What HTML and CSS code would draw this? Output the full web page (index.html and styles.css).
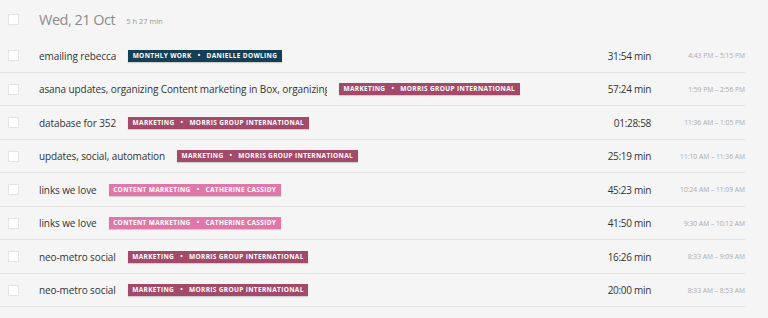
FILE: index.html
```html
<!DOCTYPE html>
<html lang="en">
<head>
  <meta charset="UTF-8">
  <title>Time entries</title>
  <link rel="stylesheet" href="styles.css">
</head>
<body>
  <div class="day">
    <div class="day-header">
      <span class="checkbox"></span>
      <h2>Wed, 21 Oct</h2>
      <span class="day-total">5 h 27 min</span>
    </div>
    <ul class="entries">
      <li class="entry">
        <span class="checkbox"></span>
        <div class="entry-main">
          <span class="entry-title">emailing rebecca</span>
          <span class="tag tag-monthly">Monthly Work <i>•</i> Danielle Dowling</span>
        </div>
        <span class="duration">31:54 min</span>
        <span class="range">4:43 PM – 5:15 PM</span>
      </li>
      <li class="entry">
        <span class="checkbox"></span>
        <div class="entry-main">
          <span class="entry-title">asana updates, organizing Content marketing in Box, organizing C</span>
          <span class="tag tag-marketing">Marketing <i>•</i> Morris Group International</span>
        </div>
        <span class="duration">57:24 min</span>
        <span class="range">1:59 PM – 2:56 PM</span>
      </li>
      <li class="entry">
        <span class="checkbox"></span>
        <div class="entry-main">
          <span class="entry-title">database for 352</span>
          <span class="tag tag-marketing">Marketing <i>•</i> Morris Group International</span>
        </div>
        <span class="duration">01:28:58</span>
        <span class="range">11:36 AM – 1:05 PM</span>
      </li>
      <li class="entry">
        <span class="checkbox"></span>
        <div class="entry-main">
          <span class="entry-title">updates, social, automation</span>
          <span class="tag tag-marketing">Marketing <i>•</i> Morris Group International</span>
        </div>
        <span class="duration">25:19 min</span>
        <span class="range">11:10 AM – 11:36 AM</span>
      </li>
      <li class="entry">
        <span class="checkbox"></span>
        <div class="entry-main">
          <span class="entry-title">links we love</span>
          <span class="tag tag-content">Content Marketing <i>•</i> Catherine Cassidy</span>
        </div>
        <span class="duration">45:23 min</span>
        <span class="range">10:24 AM – 11:09 AM</span>
      </li>
      <li class="entry">
        <span class="checkbox"></span>
        <div class="entry-main">
          <span class="entry-title">links we love</span>
          <span class="tag tag-content">Content Marketing <i>•</i> Catherine Cassidy</span>
        </div>
        <span class="duration">41:50 min</span>
        <span class="range">9:30 AM – 10:12 AM</span>
      </li>
      <li class="entry">
        <span class="checkbox"></span>
        <div class="entry-main">
          <span class="entry-title">neo-metro social</span>
          <span class="tag tag-marketing">Marketing <i>•</i> Morris Group International</span>
        </div>
        <span class="duration">16:26 min</span>
        <span class="range">8:33 AM – 9:09 AM</span>
      </li>
      <li class="entry">
        <span class="checkbox"></span>
        <div class="entry-main">
          <span class="entry-title">neo-metro social</span>
          <span class="tag tag-marketing">Marketing <i>•</i> Morris Group International</span>
        </div>
        <span class="duration">20:00 min</span>
        <span class="range">8:33 AM – 8:53 AM</span>
      </li>
    </ul>
  </div>
</body>
</html>
```

FILE: styles.css
```css
body {
  font-family: 'Open Sans', Arial, sans-serif;
  background-color: #f5f5f5;
  margin: 0;
  color: #333;
}
.day {
  width: 745px;
}
.checkbox {
  flex: 0 0 auto;
  width: 9px;
  height: 9px;
  background: #fff;
  border: 1px solid #e4e4e4;
  margin: 0 20px 0 8px;
}
.day-header {
  display: flex;
  align-items: center;
  height: 39px;
}
.day-header h2 {
  margin: 0;
  font-size: 14.5px;
  font-weight: 400;
  letter-spacing: -0.5px;
  color: #8c8c8c;
}
.day-total {
  margin-left: 11px;
  margin-top: 3px;
  font-size: 7.5px;
  color: #999;
}
.entries {
  list-style: none;
  margin: 0;
  padding: 0;
}
.entry {
  display: flex;
  align-items: center;
  height: 31.5px;
  padding-top: 1px;
  border-bottom: 1px solid #e3e3e3;
}
.entry-main {
  flex: 1;
  min-width: 0;
  display: flex;
  align-items: center;
  gap: 12px;
}
.entry-title {
  font-size: 10px;
  letter-spacing: -0.1px;
  color: #333;
  white-space: nowrap;
  overflow: hidden;
  max-width: 288px;
}
.tag {
  flex: 0 0 auto;
  padding: 0 4.5px;
  height: 12px;
  line-height: 12px;
  font-size: 6.5px;
  font-weight: 700;
  letter-spacing: 0.35px;
  text-transform: uppercase;
  color: #fff;
  white-space: nowrap;
  box-shadow: 0 1px 1px rgba(0, 0, 0, 0.15);
}
.tag i {
  font-style: normal;
  margin: 0 4px;
}
.tag-monthly {
  background-color: #153f55;
}
.tag-marketing {
  background-color: #a3496a;
}
.tag-content {
  background-color: #df78a9;
}
.duration {
  width: 120px;
  text-align: right;
  font-size: 10px;
  letter-spacing: -0.3px;
  color: #333;
}
.range {
  width: 94px;
  text-align: right;
  font-size: 6.7px;
  color: #aaa;
}
```
